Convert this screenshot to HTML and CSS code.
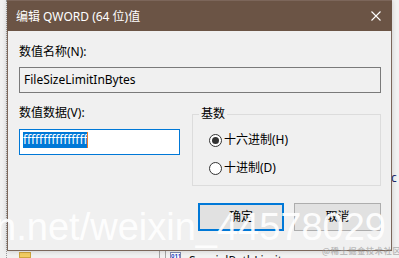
FILE: index.html
```html
<!DOCTYPE html>
<html lang="zh-CN">
<head>
<meta charset="utf-8">
<title>编辑 QWORD (64 位)值</title>
<link rel="stylesheet" href="styles.css">
</head>
<body>
<div class="app">
  <div class="tree">
    <div class="tree-line"></div>
    <div class="folders">
      <div class="folder"></div>
      <div class="folder"></div>
    </div>
  </div>
  <div class="splitter"></div>
  <div class="list">
    <div class="list-row peek">c</div>
    <div class="list-row last">
      <span class="reg-icon">011</span>
      <span class="reg-name">SpecialPathLimit</span>
    </div>
  </div>
</div>

<div class="dialog">
  <div class="titlebar">
    <span class="title">编辑 QWORD (64 位)值</span>
    <svg class="close" width="10" height="10" viewBox="0 0 10 10"><path d="M0.5 0.5 L9.5 9.5 M9.5 0.5 L0.5 9.5" stroke="#ffffff" stroke-width="1.1" fill="none"/></svg>
  </div>
  <div class="body">
    <div class="label">数值名称(N):</div>
    <div class="field readonly">FileSizeLimitInBytes</div>
    <div class="row">
      <div class="col">
        <div class="label label-data">数值数据(V):</div>
        <div class="field active"><span class="sel">ffffffffffffffff</span><span class="caret"></span></div>
      </div>
      <fieldset class="group">
        <legend>基数</legend>
        <div class="radio"><span class="dot checked"></span><span>十六进制(H)</span></div>
        <div class="radio"><span class="dot"></span><span>十进制(D)</span></div>
      </fieldset>
    </div>
    <div class="buttons">
      <div class="btn default">确定</div>
      <div class="btn cancel">取消</div>
    </div>
  </div>
</div>

<div class="wm-url">csdn.net/weixin_44578029</div>
<div class="wm-juejin">@稀土掘金技术社区</div>
</body>
</html>
```

FILE: styles.css
```css
* { box-sizing: border-box; }
html, body { margin: 0; padding: 0; }
body {
  width: 399px;
  height: 258px;
  overflow: hidden;
  position: relative;
  background: #f0f0f0;
  font-family: "Noto Sans", "Noto Sans CJK SC", sans-serif;
  font-size: 12px;
  line-height: 16px;
  color: #000;
}

/* background application (registry editor) */
.app { display: flex; height: 258px; }
.tree {
  width: 159px;
  display: flex;
  background: #f0f0f0;
}
.tree-line {
  width: 1px;
  margin-left: 6px;
  border-left: 1px dotted #9a9a9a;
  height: 258px;
}
.folders {
  display: flex;
  flex-direction: column;
  gap: 3px;
  padding-top: 242px;
  padding-left: 12px;
}
.folder {
  width: 12px;
  height: 11px;
  background: #f3cd62;
  border: 1px solid #cfa43e;
}
.splitter {
  width: 7px;
  border-left: 1px solid #a5a5a5;
  border-right: 1px solid #a5a5a5;
  background: #f0f0f0;
}
.list {
  flex: 1;
  display: flex;
  flex-direction: column;
  padding-top: 170px;
  background: #f2f2f2;
}
.list-row { height: 16px; line-height: 16px; white-space: nowrap; }
.peek { padding-left: 225px; color: #1c2a6e; }
.last {
  margin-top: 65px;
  padding-left: 4px;
  display: flex;
  align-items: flex-start;
  gap: 8px;
  padding-top: 1px;
}
.reg-icon {
  width: 11px;
  height: 12px;
  border: 1px solid #7d8bb0;
  background: #fff;
  color: #1d47c2;
  font-size: 6px;
  line-height: 7px;
  font-weight: bold;
  text-align: center;
  overflow: hidden;
}
.reg-name { color: #111; margin-top: 1px; }

/* dialog window */
.dialog {
  position: absolute;
  left: 7px;
  top: 0;
  width: 385px;
  height: 251px;
  background: #f0f0f0;
  border: 1px solid #7b675b;
  border-top: none;
  box-shadow: 0 0 5px rgba(0, 0, 0, 0.18);
  display: flex;
  flex-direction: column;
}
.titlebar {
  height: 31px;
  margin: 0 -1px;
  background: #6b5445;
  border-top: 1px solid #7c665a;
  display: flex;
  align-items: center;
  justify-content: space-between;
  padding: 0 11px 0 9px;
  color: #fff;
}
.title { font-size: 12px; line-height: 16px; margin-top: 1px; }
.close { display: block; margin-top: -1px; }

.body {
  display: flex;
  flex-direction: column;
  padding: 13px 10px 0 11px;
}
.label { height: 16px; }
.field {
  height: 26px;
  border: 1px solid #7a7a7a;
  display: flex;
  align-items: center;
  white-space: nowrap;
}
.readonly {
  margin-top: 7px;
  background: #f0f0f0;
  padding-left: 4px;
}
.row {
  display: flex;
  align-items: flex-start;
  gap: 12px;
  margin-top: 12px;
}
.col { width: 161px; display: flex; flex-direction: column; }
.active {
  margin-top: 8px;
  background: #fff;
  border-color: #0078d7;
  align-items: flex-start;
  padding: 2px 0 0 3px;
}
.sel {
  background: #0078d7;
  color: #fff;
  height: 16px;
  letter-spacing: -0.1px;
}
.caret { width: 1px; height: 16px; background: #f07a22; }

.group {
  width: 189px;
  margin: 1px 0 0 0;
  padding: 10px 0 9px 6px;
  border: 1px solid #dcdcdc;
  min-width: 0;
}
.group legend {
  padding: 0 2px;
  line-height: 16px;
  font-size: 12px;
}
.radio {
  display: flex;
  align-items: center;
  gap: 2px;
  height: 16px;
  margin-left: 10px;
  white-space: nowrap;
}
.radio + .radio { margin-top: 12px; }
.dot {
  width: 13px;
  height: 13px;
  border-radius: 50%;
  border: 1px solid #333;
  background: #fff;
  display: flex;
  align-items: center;
  justify-content: center;
}
.dot.checked::after {
  content: "";
  width: 7px;
  height: 7px;
  border-radius: 50%;
  background: #333;
}

.buttons {
  display: flex;
  justify-content: flex-end;
  gap: 10px;
  margin-top: 17px;
}
.btn {
  width: 86px;
  height: 28px;
  background: #e1e1e1;
  border: 1px solid #adadad;
  display: flex;
  align-items: center;
  justify-content: center;
}
.btn.default { border: 2px solid #0078d7; }
.btn.cancel { width: 87px; }

/* watermarks overlaid on the screenshot */
.wm-url {
  position: absolute;
  right: 13px;
  top: 208px;
  font-family: "Liberation Sans", Arial, sans-serif;
  font-size: 38px;
  line-height: 38px;
  color: rgba(255, 255, 255, 0.93);
  white-space: nowrap;
}
.wm-juejin {
  position: absolute;
  left: 322px;
  top: 246px;
  font-family: "Noto Sans CJK SC", sans-serif;
  font-size: 8px;
  line-height: 9px;
  letter-spacing: 0.8px;
  font-weight: bold;
  color: rgba(150, 150, 150, 0.6);
  white-space: nowrap;
}
```
